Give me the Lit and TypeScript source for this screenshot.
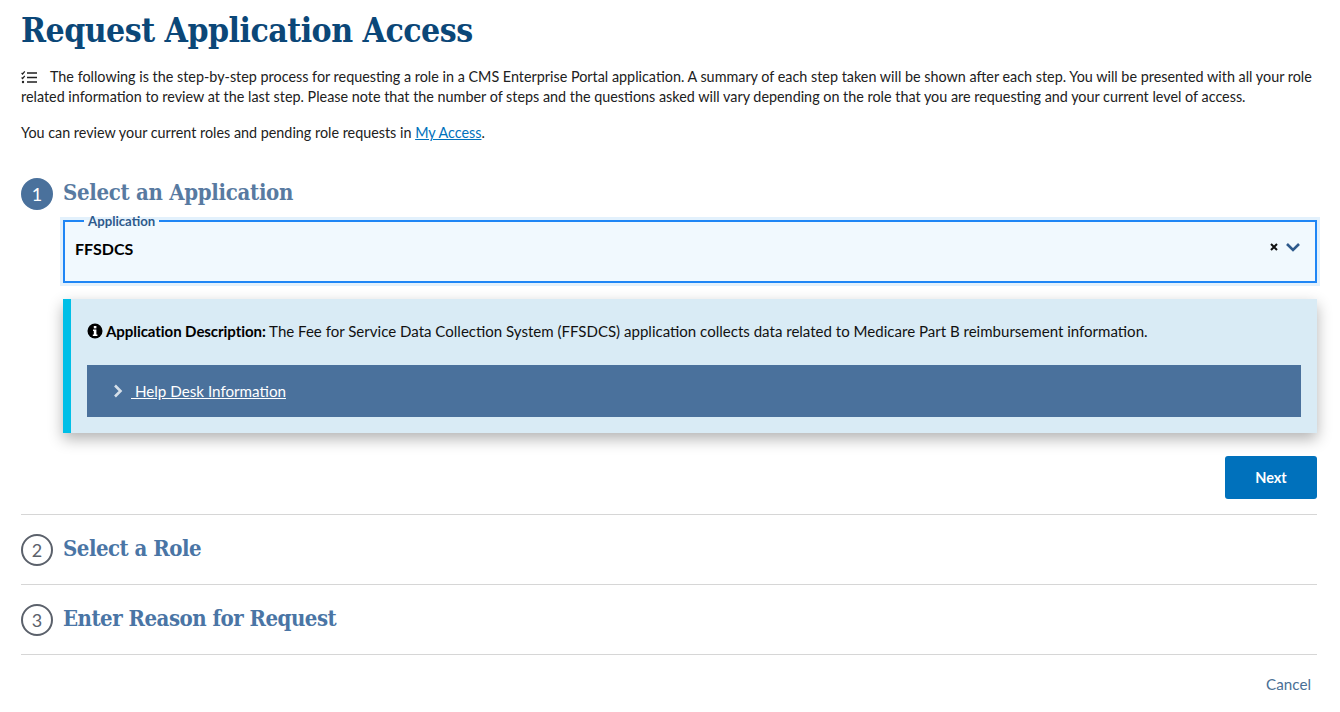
import { LitElement, html, css } from "lit";
import { customElement } from "lit/decorators.js";

@customElement("app-root")
export class AppRoot extends LitElement {
  static styles = css`
    :host { display: block; background: #fff; height: 712px; overflow: hidden; font-family: "Lato", "Noto Sans", sans-serif; color: #212121; }
    .page { padding: 11px 23px 0 21px; display: flex; flex-direction: column; }
    h1 { margin: 0; font: 700 33.5px/40px "DejaVu Serif", serif; font-stretch: condensed; color: #0b4778; letter-spacing: -.52px; }
    .intro { margin: 16px 0 0; font-size: 14.37px; line-height: 20px; }
    .intro svg { vertical-align: -2px; margin-right: 12px; }
    .sub { margin: 16px 0 0; font-size: 14.35px; line-height: 20px; }
    .sub a { color: #0071bc; }
    .step { display: flex; align-items: center; gap: 10px; }
    .num { width: 32px; height: 32px; box-sizing: border-box; border-radius: 50%; display: flex; align-items: center; justify-content: center; font-size: 18px; border: 2px solid #5b616b; color: #5b616b; flex: none; }
    .num.on { background: #4a719c; border-color: #4a719c; color: #fff; }
    h2 { margin: 0 0 4px; font: 700 22px/28px "DejaVu Serif", serif; font-stretch: condensed; color: #4a75a5; letter-spacing: -.5px; }
    .first { margin-top: 35px; height: 32px; }
    .first h2 { color: #587aa1; letter-spacing: -.3px; }
    .body { margin-left: 42px; display: flex; flex-direction: column; }
    fieldset { margin: 3px 0 0; padding: 0 10px; height: 70px; box-sizing: border-box; border: 2px solid #1f86f5; background: #f1f9fe; box-shadow: 0 0 0 3px #e3f1fc; display: flex; align-items: flex-start; justify-content: space-between; }
    legend { margin-left: 9px; padding: 0 4px; font-size: 13.2px; line-height: 16px; font-weight: 700; color: #2e5a8c; }
    .val { font-size: 16px; font-weight: 700; color: #000; margin-top: 10px; }
    .tools { display: flex; align-items: center; gap: 6px; margin-top: 13px; margin-right: 4px; }
    .alert { margin-top: 16px; background: #d9ebf5; border-left: 8px solid #00bfe7; box-shadow: 0 6px 14px rgba(0,0,0,.3); padding: 20px 16px 16px; }
    .desc { margin: 0; font-size: 15.06px; line-height: 24px; color: #111; display: flex; align-items: center; gap: 3px; }
    .desc b { color: #000; letter-spacing: -.08px; }
    .help { margin-top: 22px; height: 52px; background: #4a719c; display: flex; align-items: center; padding-left: 26px; gap: 8px; color: #fff; font-size: 15.2px; }
    .help a { color: #fff; text-decoration: underline; white-space: pre; }
    .actions { display: flex; justify-content: flex-end; margin-top: 23px; }
    button { width: 92px; height: 43px; border: 0; border-radius: 3px; background: #0071bc; color: #fff; font: 700 14.5px "Lato", sans-serif; }
    hr { border: 0; border-top: 1px solid #d6d6d6; margin: 0; }
    .rule1 { margin-top: 15px; }
    .row { height: 69px; }
    .cancel { text-align: right; padding: 20px 6px 0 0; font-size: 15.2px; color: #4a6f95; }
  `;

  render() {
    return html`<div class="page">
      <h1>Request Application Access</h1>
      <p class="intro"><svg width="17" height="13" viewBox="0 0 17 13" fill="#212121"><path d="M6 1.2h10v1.6H6zM6 5.7h10v1.6H6zM6 10.2h10v1.6H6z"/><path d="M.6 2l1 1L3.8.4" fill="none" stroke="#212121" stroke-width="1.2"/><path d="M.6 6.5l1 1 2.2-2.6" fill="none" stroke="#212121" stroke-width="1.2"/><circle cx="2" cy="11" r="1.2"/></svg>The following is the step-by-step process for requesting a role in a CMS Enterprise Portal application. A summary of each step taken will be shown after each step. You will be presented with all your role related information to review at the last step. Please note that the number of steps and the questions asked will vary depending on the role that you are requesting and your current level of access.</p>
      <p class="sub">You can review your current roles and pending role requests in <a href="#">My Access</a>.</p>

      <div class="step first"><span class="num on">1</span><h2>Select an Application</h2></div>
      <div class="body">
        <fieldset>
          <legend>Application</legend>
          <span class="val">FFSDCS</span>
          <span class="tools">
            <svg width="10" height="10" viewBox="0 0 10 10"><path d="M2 2l6 6M8 2l-6 6" stroke="#111" stroke-width="2"/></svg>
            <svg width="16" height="10" viewBox="0 0 16 10"><path d="M2 2l6 6 6-6" fill="none" stroke="#2e5a8c" stroke-width="2.6"/></svg>
          </span>
        </fieldset>
        <div class="alert">
          <p class="desc">
            <svg width="16" height="16" viewBox="0 0 16 16"><circle cx="8" cy="8" r="7.5" fill="#000"/><rect x="6.8" y="3" width="2.6" height="2.4" fill="#fff"/><path d="M6 6.6h3.4v5h1v1.4H5.8v-1.4h1V8H6z" fill="#fff"/></svg>
            <span><b>Application Description:</b> The Fee for Service Data Collection System (FFSDCS) application collects data related to Medicare Part B reimbursement information.</span>
          </p>
          <div class="help">
            <svg width="10" height="14" viewBox="0 0 10 14"><path d="M2 1.5l5.5 5.5L2 12.5" fill="none" stroke="#d5dfe9" stroke-width="2.6"/></svg>
            <a href="#"> Help Desk Information</a>
          </div>
        </div>
        <div class="actions"><button>Next</button></div>
      </div>
      <hr class="rule1" />
      <div class="step row"><span class="num">2</span><h2>Select a Role</h2></div>
      <hr />
      <div class="step row"><span class="num">3</span><h2>Enter Reason for Request</h2></div>
      <hr />
      <div class="cancel">Cancel</div>
    </div>`;
  }
}
